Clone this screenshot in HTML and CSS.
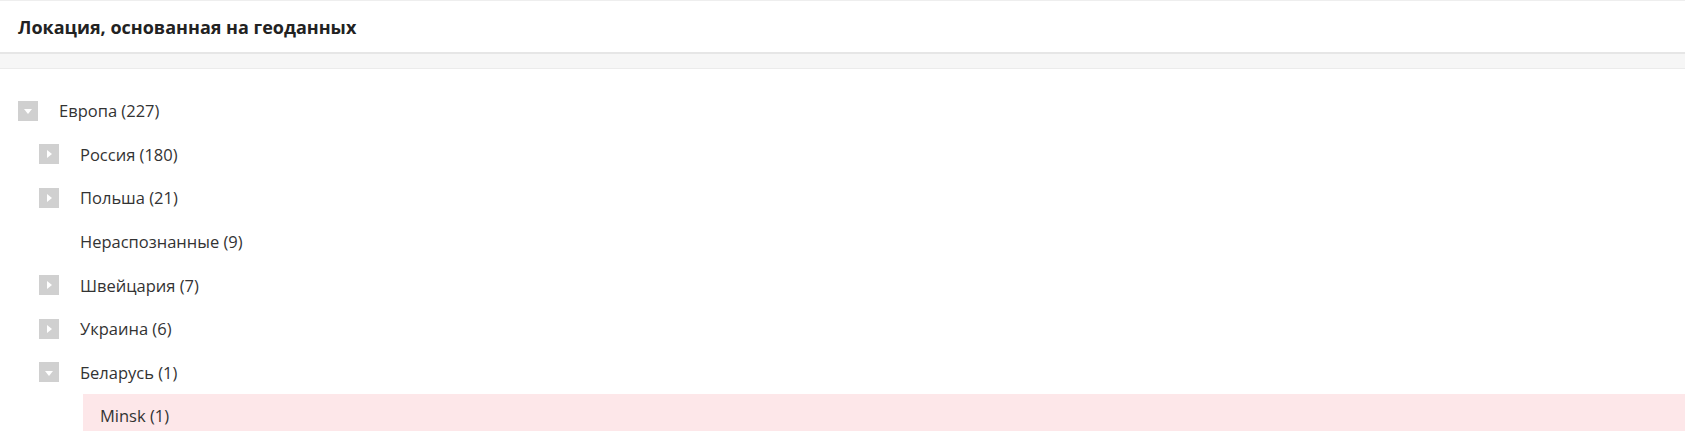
FILE: index.html
```html
<!DOCTYPE html>
<html lang="ru">
<head>
    <meta charset="UTF-8">
    <title>Локация</title>
    <link rel="stylesheet" href="styles.css">
</head>
<body>
<div class="panel">
    <div class="panel-head">Локация, основанная на геоданных</div>
    <div class="panel-band"></div>

    <ul class="tree">
        <li class="node lvl1"><span class="tog open"></span><span class="label">Европа (227)</span></li>
        <li class="node lvl2"><span class="tog"></span><span class="label">Россия (180)</span></li>
        <li class="node lvl2"><span class="tog"></span><span class="label">Польша (21)</span></li>
        <li class="node lvl2"><span class="tog none"></span><span class="label">Нераспознанные (9)</span></li>
        <li class="node lvl2"><span class="tog"></span><span class="label">Швейцария (7)</span></li>
        <li class="node lvl2"><span class="tog"></span><span class="label">Украина (6)</span></li>
        <li class="node lvl2"><span class="tog open"></span><span class="label">Беларусь (1)</span></li>
        <li class="node lvl3 selected"><span class="label">Minsk (1)</span></li>
    </ul>
</div>
</body>
</html>
```

FILE: styles.css
```css
*{
    padding:0;
    margin:0;
    box-sizing:border-box;
}

body{
    font-family:"Open Sans","Liberation Sans",sans-serif;
    color:#333;
    background:#fff;
    overflow:hidden;
}

.panel{
    border-top:1px solid #eeeeee;
    margin-right:1px;
}

.panel-head{
    height:53px;
    padding:0 18px;
    display:flex;
    align-items:center;
    font-size:18px;
    font-weight:bold;
    color:#222;
    border-bottom:2px solid #e6e6e6;
}

.panel-band{
    height:15px;
    background:#f6f6f6;
    border-bottom:1px solid #ebebeb;
}

.tree{
    list-style:none;
    padding-top:20px;
}

.node{
    height:43.6px;
    display:flex;
    align-items:center;
    font-size:16.5px;
}

.lvl1{
    padding-left:18px;
}

.lvl2{
    padding-left:39px;
}

.lvl3{
    margin-left:83px;
    padding-left:17px;
}

.selected{
    background:#fde7e9;
}

.tog{
    width:20px;
    height:20px;
    background:#d0d0d0;
    margin-right:21px;
    display:flex;
    align-items:center;
    justify-content:center;
    flex:none;
}

.tog::after{
    content:"";
    border-style:solid;
    border-color:transparent transparent transparent #fff;
    border-width:4px 0 4px 5px;
    margin-left:1px;
}

.tog.open::after{
    border-color:#fff transparent transparent transparent;
    border-width:5px 4px 0 4px;
    margin-left:0;
    margin-top:2px;
}

.tog.none{
    background:none;
}

.tog.none::after{
    display:none;
}
```
